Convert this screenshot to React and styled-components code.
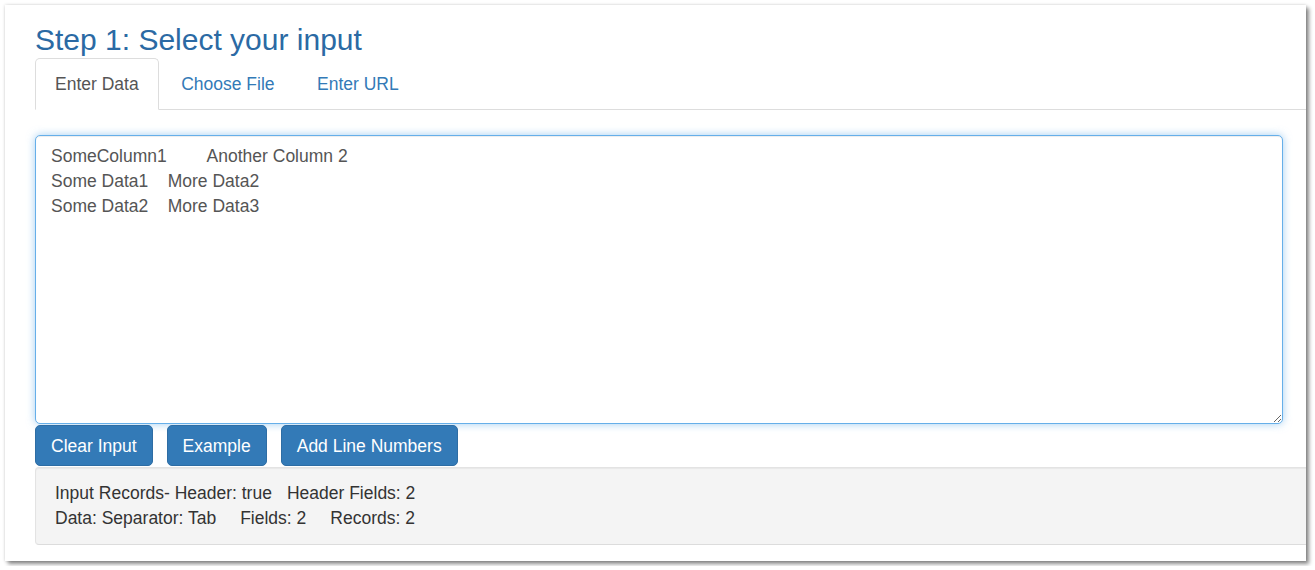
import React from "react";
import styled, { createGlobalStyle } from "styled-components";

const GlobalStyle = createGlobalStyle`
  html, body {
    margin: 0;
    padding: 0;
    background: #fff;
  }
  body {
    padding: 5px;
    font-family: "Liberation Sans", Arial, sans-serif;
    font-size: 17.5px;
    line-height: 25px;
    color: #333;
  }
`;

const Card = styled.div`
  width: 1301px;
  height: 556px;
  box-sizing: border-box;
  padding: 18px 0 0 30px;
  background: #fff;
  overflow: hidden;
  box-shadow: 0 0 3px rgba(0, 0, 0, 0.18), 3px 3px 4px rgba(0, 0, 0, 0.45);
`;

const Content = styled.div`
  width: 1300px;
`;

const Title = styled.h2`
  margin: 0 0 2px;
  font-size: 30px;
  line-height: 33px;
  font-weight: normal;
  color: #2b6aa4;
`;

const Tabs = styled.ul`
  display: flex;
  list-style: none;
  margin: 0;
  padding: 0;
  border-bottom: 1px solid #ddd;
`;

const Tab = styled.li`
  margin: 0 2.5px -1px 0;
  padding: 12.5px 19px;
  border: 1px solid ${(p) => (p.$active ? "#ddd" : "transparent")};
  border-bottom-color: ${(p) => (p.$active ? "#fff" : "transparent")};
  border-radius: 5px 5px 0 0;
  background: ${(p) => (p.$active ? "#fff" : "transparent")};
  color: ${(p) => (p.$active ? "#555" : "#337ab7")};
  cursor: pointer;
`;

const Input = styled.textarea`
  display: block;
  box-sizing: border-box;
  width: 1248px;
  height: 289px;
  margin: 25px 0 0;
  padding: 7.5px 15px;
  border: 1px solid #66afe9;
  border-radius: 5px;
  outline: none;
  font: inherit;
  line-height: 25px;
  color: #555;
  tab-size: 8;
  box-shadow: inset 0 1px 1px rgba(0, 0, 0, 0.075),
    0 0 8px rgba(102, 175, 233, 0.6);
`;

const Buttons = styled.div`
  display: flex;
  gap: 14px;
  margin-top: 1px;
`;

const Button = styled.button`
  box-sizing: border-box;
  height: 41px;
  padding: 7.5px 15px;
  border: 1px solid #2e6da4;
  border-radius: 5px;
  background: #337ab7;
  color: #fff;
  font: inherit;
  line-height: 25px;
  cursor: pointer;
`;

const Well = styled.div`
  margin-top: 1px;
  padding: 12.5px 19px 13px;
  background: #f4f4f4;
  border: 1px solid #e3e3e3;
  border-bottom-color: #dcdcdc;
  border-radius: 4px 0 0 4px;
  box-shadow: inset 0 1px 1px rgba(0, 0, 0, 0.05);
`;

const StatRow = styled.div`
  display: flex;
  gap: ${(p) => p.$gap}px;
`;

export default function App() {
  const sample =
    "SomeColumn1\tAnother Column 2\nSome Data1\tMore Data2\nSome Data2\tMore Data3";

  return (
    <>
      <GlobalStyle />
      <Card>
        <Content>
          <Title>Step 1: Select your input</Title>
          <Tabs>
            <Tab $active>Enter Data</Tab>
            <Tab>Choose File</Tab>
            <Tab>Enter URL</Tab>
          </Tabs>
          <Input defaultValue={sample} spellCheck={false} />
          <Buttons>
            <Button>Clear Input</Button>
            <Button>Example</Button>
            <Button>Add Line Numbers</Button>
          </Buttons>
          <Well>
            <StatRow $gap={15}>
              <span>Input Records- Header: true</span>
              <span>Header Fields: 2</span>
            </StatRow>
            <StatRow $gap={24}>
              <span>Data: Separator: Tab</span>
              <span>Fields: 2</span>
              <span>Records: 2</span>
            </StatRow>
          </Well>
        </Content>
      </Card>
    </>
  );
}
